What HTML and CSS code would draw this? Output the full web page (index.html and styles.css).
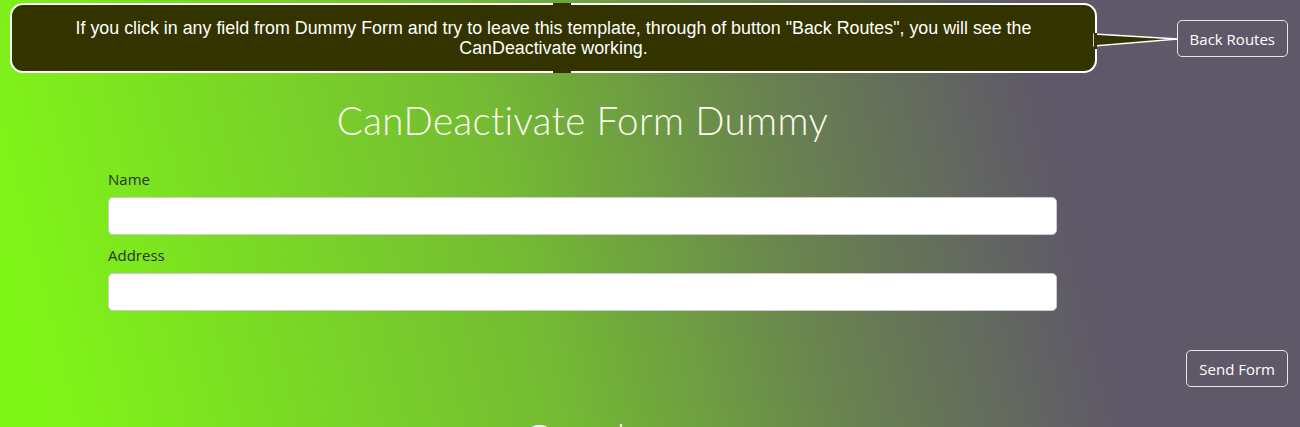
FILE: index.html
```html
<!DOCTYPE html>
<html lang="en">
<head>
<meta charset="utf-8">
<title>CanDeactivate Form Dummy</title>
<link rel="stylesheet" href="styles.css">
</head>
<body>
<div class="page">
  <div class="tooltip">
    <p class="tooltip-text">If you click in any field from Dummy Form and try to leave this template, through of button "Back Routes", you will see the CanDeactivate working.</p>
    <svg class="tooltip-tail" width="86" height="16" viewBox="0 0 86 16">
      <polygon points="0,1 84,6 0,13" fill="#333300" stroke="#ffffff" stroke-width="1.5" stroke-linejoin="miter"/>
      <rect x="0" y="0" width="3" height="16" fill="#333300"/>
    </svg>
  </div>

  <div class="topbar">
    <button class="btn" type="button">Back Routes</button>
  </div>

  <main class="content">
    <h1 class="title">CanDeactivate Form Dummy</h1>
    <form class="form">
      <div class="field">
        <label class="label" for="name">Name</label>
        <input class="input" id="name" type="text">
      </div>
      <div class="field">
        <label class="label" for="address">Address</label>
        <input class="input" id="address" type="text">
      </div>
    </form>
  </main>

  <div class="actions">
    <button class="btn" type="button">Send Form</button>
  </div>

  <h2 class="subtitle">Guards</h2>
</div>
</body>
</html>
```

FILE: styles.css
```css
html, body {
  margin: 0;
  padding: 0;
  height: 100%;
}

body {
  font-family: "Open Sans", "Noto Sans", sans-serif;
  background: linear-gradient(76deg, #80f518 4%, #74bb33 40%, #69834f 60%, #5f5869 80%, #5f5869 100%);
  overflow: hidden;
}

.page {
  position: relative;
  height: 427px;
  overflow: hidden;
}

.tooltip {
  position: absolute;
  left: 10px;
  top: 3px;
  width: 1083px;
  height: 66px;
  background: #333300;
  border: 2px solid #ffffff;
  border-radius: 13px;
  box-sizing: content-box;
  z-index: 2;
}

.tooltip::before,
.tooltip::after {
  content: "";
  position: absolute;
  left: 541px;
  width: 18px;
  height: 3px;
  background: #333300;
}

.tooltip::before {
  top: -2px;
}

.tooltip::after {
  bottom: -2px;
}

.tooltip-text {
  margin: 0;
  padding: 13px 38px 0;
  color: #ffffff;
  font-family: "Liberation Sans", Arial, sans-serif;
  font-size: 17.85px;
  line-height: 20px;
  text-align: center;
}

.tooltip-tail {
  position: absolute;
  left: 1082px;
  top: 28px;
  overflow: visible;
}

.topbar {
  display: flex;
  justify-content: flex-end;
  padding: 20px 12px 0 0;
}

.btn {
  height: 37px;
  padding: 0 12px;
  background: transparent;
  border: 1px solid #e6e6e6;
  border-radius: 5px;
  color: #ffffff;
  font-family: "Open Sans", "Noto Sans", sans-serif;
  font-size: 15px;
  cursor: pointer;
}

.content {
  width: 949px;
  margin-left: 108px;
}

.title {
  margin: 40px 0 0;
  text-align: center;
  color: #fbfbee;
  font-family: "Lato", sans-serif;
  font-weight: 300;
  font-size: 38.5px;
  line-height: 46px;
  letter-spacing: 0.4px;
}

.form {
  display: flex;
  flex-direction: column;
  gap: 10px;
  margin-top: 26px;
}

.field {
  display: flex;
  flex-direction: column;
  gap: 8px;
}

.label {
  color: #2b3320;
  font-size: 15px;
  line-height: 20px;
}

.input {
  height: 38px;
  box-sizing: border-box;
  border: 1px solid #cccccc;
  border-radius: 5px;
  background: #ffffff;
  padding: 6px 12px;
  font-size: 14px;
}

.actions {
  display: flex;
  justify-content: flex-end;
  padding: 39px 12px 0 0;
}

.subtitle {
  width: 949px;
  margin: 28px 0 0 108px;
  text-align: center;
  color: #fbfbee;
  font-family: "Lato", sans-serif;
  font-weight: 300;
  font-size: 38.5px;
  line-height: 46px;
}
```
